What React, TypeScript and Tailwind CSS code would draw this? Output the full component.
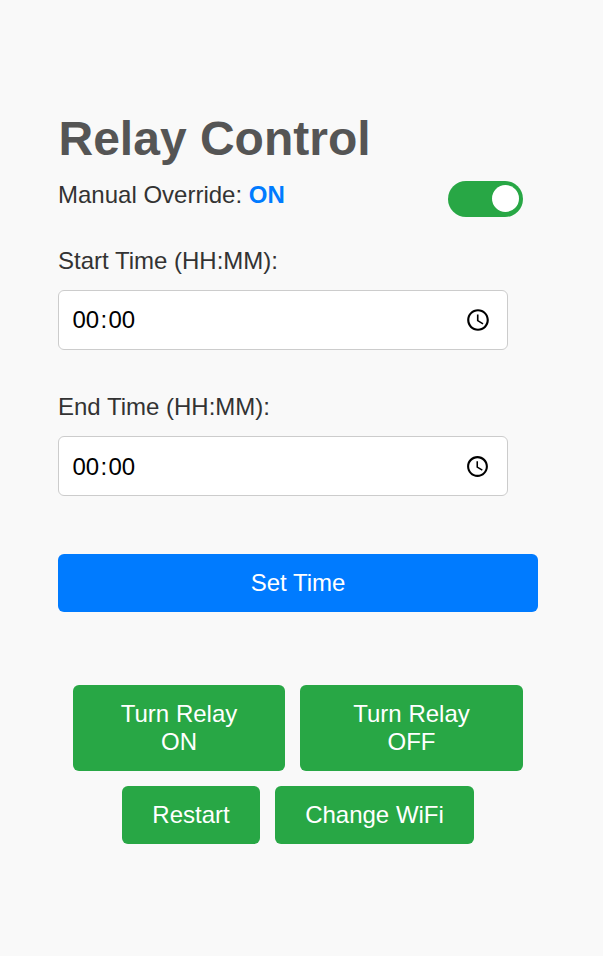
import React from "react";

function ClockIcon({ size }: { size: number }) {
  return (
    <svg width={size} height={size} viewBox="0 0 24 24" fill="#000">
      <path d="M11.99 2C6.47 2 2 6.48 2 12s4.47 10 9.99 10C17.52 22 22 17.52 22 12S17.52 2 11.99 2zM12 20c-4.42 0-8-3.58-8-8s3.58-8 8-8 8 3.58 8 8-3.58 8-8 8z" />
      <path d="M12.5 7H11v6l5.25 3.15.75-1.23-4.5-2.67z" />
    </svg>
  );
}

function TimeField({
  label,
  className,
  fieldClass,
  iconSize,
}: {
  label: string;
  className: string;
  fieldClass: string;
  iconSize: number;
}) {
  return (
    <div className={className}>
      <label className="block h-7 text-[24px] leading-7">{label}</label>
      <div
        className={
          "mt-[15px] flex h-[60px] w-[450px] items-center justify-between rounded-[6px] border border-[#cccccc] bg-white pl-[13.5px] text-[24px] leading-7 text-black " +
          fieldClass
        }
      >
        <span>
          00<span className="px-[1.25px]">:</span>00
        </span>
        <ClockIcon size={iconSize} />
      </div>
    </div>
  );
}

const green =
  "flex items-center justify-center rounded-[6px] bg-[#28a745] text-center text-[24px] leading-7 text-white";

export default function App() {
  return (
    <main className="h-[956px] w-[603px] overflow-hidden bg-[#f9f9f9] pt-[111px] pl-[58px] font-['Liberation_Sans',Arial,sans-serif] text-[#333333]">
      <h1 className="h-[56px] pl-[0.5px] text-[48px] leading-[56px] font-bold text-[#555555]">Relay Control</h1>
      <div className="mt-[14px] flex h-[36px] w-[465px] items-start justify-between">
        <p className="text-[24px] leading-7">
          Manual Override: <strong className="text-[#007bff]">ON</strong>
        </p>
        <button className="flex h-9 w-[75px] items-start justify-end rounded-full bg-[#28a745] pt-1 pr-1">
          <span className="size-[27px] rounded-full bg-white" />
        </button>
      </div>
      <TimeField label="Start Time (HH:MM):" className="mt-[30px]" fieldClass="pr-4" iconSize={26} />
      <TimeField label="End Time (HH:MM):" className="mt-[43px]" fieldClass="pt-px pr-[17px]" iconSize={25} />
      <button className="mt-[58px] block h-[58px] w-[480px] rounded-[6px] bg-[#007bff] text-[24px] leading-7 text-white">
        Set Time
      </button>
      <div className="mt-[73px] flex w-[480px] flex-wrap justify-center gap-[15px]">
        <button className={green + " h-[86px] w-[212px] px-[30px]"}>
          <span>Turn Relay<br />ON</span>
        </button>
        <button className={green + " h-[86px] w-[223px] px-[30px]"}>
          <span>Turn Relay<br />OFF</span>
        </button>
        <button className={green + " h-[58px] w-[138px]"}>Restart</button>
        <button className={green + " h-[58px] w-[199px]"}>Change WiFi</button>
      </div>
    </main>
  );
}
